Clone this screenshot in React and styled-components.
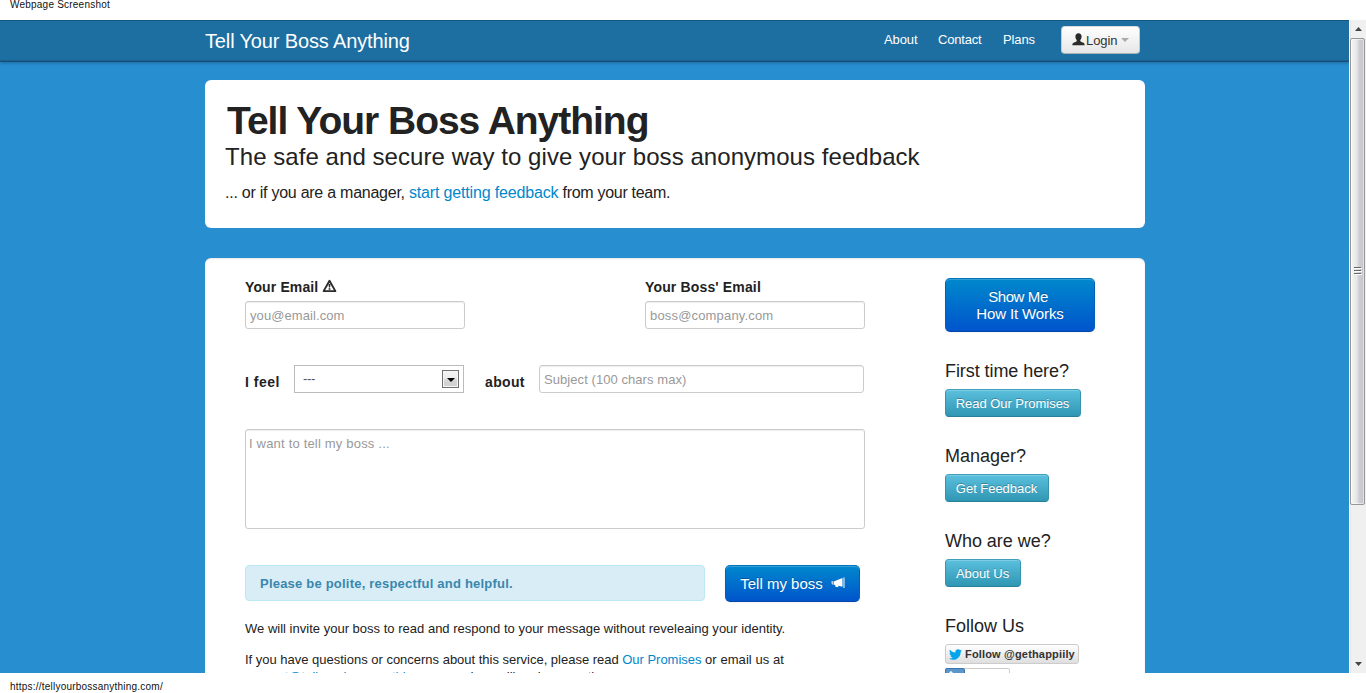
import React from 'react';
import styled, { createGlobalStyle } from 'styled-components';
import { FaTwitter } from 'react-icons/fa';

const GlobalStyle = createGlobalStyle`
  * { box-sizing: border-box; }
  body {
    margin: 0;
    background: #fff;
    color: #222;
    font: 13px/18px "Liberation Sans", Arial, sans-serif;
    overflow: hidden;
  }
  h1, h2, h4, p { margin: 0; font-weight: normal; }
`;

const Sheet = styled.div`
  display: flex;
  flex-direction: column;
  height: 693px;
  overflow: hidden;
`;

const Caption = styled.div`
  flex: 0 0 20px;
  padding-left: 10px;
  color: #111;
  font-size: 10px;
  line-height: ${(p) => p.$line};
  padding-top: ${(p) => p.$top};
  letter-spacing: 0.22px;
`;

const Browser = styled.div`
  display: flex;
  flex: 0 0 653px;
  overflow: hidden;
`;

const Page = styled.div`
  width: 1349px;
  height: 653px;
  overflow: hidden;
  background: #278ed0;
`;

const Text = styled.span`
  margin-right: ${(p) => p.$shift || 0}px;
  letter-spacing: ${(p) => p.$ls || 0}px;
  white-space: nowrap;
`;

const Link = styled.a`
  color: #0088cc;
  letter-spacing: ${(p) => p.$ls || 0}px;
  text-decoration: none;
`;

/* Navigation */
const Navbar = styled.header`
  height: 42px;
  background: #1d6ea1;
  border-top: 1px solid #15577c;
  border-bottom: 1px solid #154f7a;
  box-shadow: 0 1px 3px rgba(0, 0, 0, 0.25), inset 0 -1px 0 rgba(0, 0, 0, 0.12);
`;

const NavInner = styled.div`
  display: flex;
  align-items: flex-start;
  width: 935px;
  margin-left: 205px;
`;

const Brand = styled.a`
  margin: 9px auto 0 0;
  color: #fff;
  font-size: 20px;
  line-height: 22px;
  letter-spacing: -0.14px;
`;

const NavItem = styled.a`
  width: ${(p) => p.$width}px;
  margin-top: 10px;
  color: #fff;
  letter-spacing: ${(p) => p.$ls}px;
`;

const LoginButton = styled.button`
  display: flex;
  align-items: center;
  width: 79px;
  height: 28px;
  margin: 5px 0 0;
  padding: 1px 9px 0 10px;
  border: 1px solid #ccc;
  border-color: #d8dde0 #c4c9cc #aab2b6;
  border-radius: 4px;
  background: linear-gradient(#fff, #e6e6e6);
  color: #333;
  font: 13px/18px "Liberation Sans", Arial, sans-serif;
  letter-spacing: -0.1px;
  white-space: nowrap;
  svg { margin: 0 1px 2px 0; }
`;

const Caret = styled.i`
  margin: 0 0 2px 4px;
  border: 4px solid transparent;
  border-top-color: #aaa;
  border-bottom: 0;
`;

/* Hero */
const Hero = styled.section`
  width: 940px;
  height: 148px;
  margin: 18px 0 30px 205px;
  padding: 21px 20px 0;
  border-radius: 6px;
  background: #fff;
`;

const Title = styled.h1`
  && { font-weight: bold; }
  margin-left: 2px;
  font-size: 39px;
  line-height: 39px;
  letter-spacing: -1.02px;
`;

const Tagline = styled.h2`
  margin-top: 3px;
  font-size: 24px;
  line-height: 27px;
  letter-spacing: 0.06px;
`;

const Lead = styled.p`
  padding-top: 13px;
  font-size: 16px;
  line-height: 19px;
`;

/* Main panel */
const Panel = styled.main`
  display: flex;
  gap: 80px;
  width: 940px;
  height: 460px;
  margin-left: 205px;
  padding: 20px 40px 0;
  border-radius: 6px 6px 0 0;
  background: #fff;
  box-shadow: inset 0 1px 2px rgba(0, 0, 0, 0.1);
`;

const Form = styled.form`
  width: 620px;
`;

const FieldRow = styled.div`
  display: flex;
  height: ${(p) => p.$height}px;
  justify-content: ${(p) => p.$justify || 'flex-start'};
  margin-bottom: 36px;
`;

const Field = styled.div`
  display: flex;
  flex-direction: column;
  justify-content: space-between;
`;

const Label = styled.label`
  display: flex;
  width: ${(p) => p.$width || 'auto'};
  padding-top: ${(p) => p.$top || 0}px;
  font-size: 14px;
  font-weight: bold;
  letter-spacing: ${(p) => p.$ls || 0.13}px;
  white-space: nowrap;
`;

const Input = styled.input`
  width: ${(p) => p.$width}px;
  height: 28px;
  padding: 1px 4px 0;
  border: 1px solid #ccc;
  border-radius: 3px;
  background: #fff;
  box-shadow: inset 0 1px 1px rgba(0, 0, 0, 0.075);
  font: 13px/18px "Liberation Sans", Arial, sans-serif;
  letter-spacing: ${(p) => p.$ls}px;
  &::placeholder { color: #999; opacity: 1; }
`;

const Message = styled.textarea`
  display: block;
  width: 620px;
  height: 100px;
  margin-bottom: 36px;
  padding: 5px 4px 4px 3px;
  border: 1px solid #ccc;
  border-radius: 3px;
  box-shadow: inset 0 1px 1px rgba(0, 0, 0, 0.075);
  font: 13px/18px "Liberation Sans", Arial, sans-serif;
  letter-spacing: 0.19px;
  resize: none;
  &::placeholder { color: #999; opacity: 1; }
`;

const Select = styled.div`
  display: flex;
  align-items: center;
  justify-content: space-between;
  width: 170px;
  height: 28px;
  margin-right: 21px;
  padding: 0 4px 0 8px;
  border: 1px solid #bbb;
  color: #555;
  letter-spacing: -0.3px;
`;

const SelectArrow = styled.span`
  display: grid;
  place-items: center;
  width: 17px;
  height: 18px;
  border: 1px solid #707070;
  background: linear-gradient(#f4f4f4, #ececec 45%, #d6d6d6 55%, #cfcfcf);
  box-shadow: inset 0 0 0 1px #f6f6f6;
  &::after {
    content: '';
    margin-top: 2px;
    border: 4px solid transparent;
    border-top-color: #000;
    border-bottom: 0;
  }
`;

const SubmitRow = styled.div`
  display: flex;
  align-items: flex-start;
  gap: 20px;
  height: 37px;
`;

const Notice = styled.div`
  width: 460px;
  height: 36px;
  padding: 9px 14px 7px;
  border: 1px solid #bce8f1;
  border-radius: 4px;
  background: #d9edf7;
  color: #3a87ad;
  font-weight: bold;
  letter-spacing: 0.211px;
`;

const PrimaryButton = styled.button`
  display: flex;
  align-items: center;
  justify-content: center;
  width: ${(p) => p.$width}px;
  height: ${(p) => p.$height}px;
  padding: 0 0 1px 0;
  border: 1px solid #0064b4;
  border-color: #0074b8 #0060bc #0047a8;
  border-radius: 5px;
  background: linear-gradient(#0088cc, #0055cc);
  box-shadow: inset 0 1px 0 rgba(255, 255, 255, 0.2), 0 1px 2px rgba(0, 0, 0, 0.05);
  color: #fff;
  font: 15px/17px "Liberation Sans", Arial, sans-serif;
  text-shadow: 0 -1px 0 rgba(0, 0, 0, 0.25);
`;

const InfoButton = styled.button`
  display: block;
  width: ${(p) => p.$width}px;
  height: 28px;
  padding: 2px 1px 0 0;
  border: 1px solid #2f96b4;
  border-color: #3f9fba #3495b1 #287f99;
  border-radius: 4px;
  background: linear-gradient(#5bc0de, #2f96b4);
  box-shadow: inset 0 1px 0 rgba(255, 255, 255, 0.2);
  color: #fff;
  font: 13px/18px "Liberation Sans", Arial, sans-serif;
  letter-spacing: -0.03px;
  text-shadow: 0 -1px 0 rgba(0, 0, 0, 0.25);
`;

const Note = styled.p`
  margin-top: ${(p) => p.$top}px;
  white-space: nowrap;
`;

const Sidebar = styled.aside`
  width: 150px;
`;

const SideTitle = styled.h4`
  margin: 29px 0 8px;
  font-size: 18px;
  line-height: 20px;
  letter-spacing: ${(p) => p.$ls || 0}px;
`;

const TwitterButton = styled.a`
  display: flex;
  align-items: center;
  width: 134px;
  height: 20px;
  padding: 0 3px;
  border: 1px solid #ccc;
  border-radius: 3px;
  background: linear-gradient(#fff, #dedede);
  color: #333;
  font-size: 11px;
  font-weight: bold;
  letter-spacing: 0.17px;
  white-space: nowrap;
  svg { margin-right: 3px; }
`;

const LinkedInBadge = styled.div`
  display: flex;
  width: 65px;
  height: 20px;
  margin-top: 4px;
  border: 1px solid #ccc;
  border-left: 0;
  border-radius: 2px;
  background: #fff;
`;

const LinkedInMark = styled.span`
  width: 20px;
  height: 20px;
  margin-top: -1px;
  padding: 2px 3px;
  border: 1px solid #3b76ad;
  border-radius: 2px;
  background: #5a96c9;
  svg { display: block; }
`;

/* Window scrollbar */
const Scrollbar = styled.div`
  display: flex;
  flex-direction: column;
  width: 17px;
  border-left: 1px solid #fff;
  background: #f0f0f0;
  box-shadow: inset 1px 0 0 #e6e6e6;
`;

const ScrollArrow = styled.span`
  display: grid;
  place-items: center;
  height: 18px;
`;

const ScrollThumb = styled.div`
  display: grid;
  place-items: center;
  width: 15px;
  height: 467px;
  margin-bottom: auto;
  border: 1px solid #979797;
  border-radius: 2px;
  background: linear-gradient(90deg, #f5f5f5, #e6e6e8 45%, #d0d0d4 60%, #c4c4c9);
  box-shadow: inset 0 0 0 1px rgba(255, 255, 255, 0.5);
`;

const PersonIcon = () => (
  <svg width="13" height="13" viewBox="0 0 13 13" fill="#2b2b2b">
    <path d="M6.500.2C4.500.2 3.400 1.500 3.400 3.500c0 1.500.5 2.700 1.300 3.500v1C4.500 8.700 3.500 9 2 9.600.8 10.100.4 10.800.3 12.300h12.400c-.1-1.500-.5-2.200-1.700-2.700C9.500 9 8.500 8.700 8.300 8V7c.8-.8 1.300-2 1.300-3.500 0-2-1.100-3.300-3.100-3.300z" />
  </svg>
);

const WarningIcon = () => (
  <svg width="15" height="14" viewBox="0 0 15 14" style={{ marginLeft: 4, marginTop: 1 }}>
    <path d="M7.500 1.800 13.400 12.100H1.600z" fill="#fff" stroke="#2b2b2b" strokeWidth="1.900" strokeLinejoin="round" />
    <path d="M6.500 5h2L8.100 8.600H6.900zM6.600 9.200h1.800v1.500H6.600z" fill="#2b2b2b" />
  </svg>
);

const MegaphoneIcon = () => (
  <svg width="14" height="12" viewBox="0 0 14 12" fill="#fff" style={{ marginLeft: 8 }}>
    <path d="M12.500.5H13.500v10.500H12.500zM11.500 1v8.700L7.300 8.700v1.600l-3-.5V8L2.600 7.700V4.500zM.5 4.300 1.700 4v3.700L.8 7.200z" />
  </svg>
);

export default function App() {
  return (
    <>
      <GlobalStyle />
      <Sheet>
        <Caption $line="9px" $top="0">Webpage Screenshot</Caption>
        <Browser>
          <Page>
            <Navbar>
              <NavInner>
                <Brand>Tell Your Boss Anything</Brand>
                <NavItem $width={54} $ls={-0.1}>About</NavItem>
                <NavItem $width={65} $ls={-0.2}>Contact</NavItem>
                <NavItem $width={58} $ls={-0.1}>Plans</NavItem>
                <LoginButton>
                  <PersonIcon />
                  Login
                  <Caret />
                </LoginButton>
              </NavInner>
            </Navbar>

            <Hero>
              <Title>Tell Your Boss Anything</Title>
              <Tagline>The safe and secure way to give your boss anonymous feedback</Tagline>
              <Lead>
                <Text $ls={-0.25}>... or if you are a manager, </Text>
                <Link $ls={-0.16}>start getting feedback</Link>
                <Text $ls={-0.3}> from your team.</Text>
              </Lead>
            </Hero>

            <Panel>
              <Form>
                <FieldRow $height={51} $justify="space-between">
                  <Field>
                    <Label>Your Email <WarningIcon /></Label>
                    <Input $width={220} $ls={0.08} placeholder="you@email.com" />
                  </Field>
                  <Field>
                    <Label $ls={0.15}>Your Boss&apos; Email</Label>
                    <Input $width={220} $ls={0.17} placeholder="boss@company.com" />
                  </Field>
                </FieldRow>

                <FieldRow $height={28}>
                  <Label $width="49px" $top={8} $ls={0.5}>I feel</Label>
                  <Select>
                    ---
                    <SelectArrow />
                  </Select>
                  <Label $width="54px" $top={8} $ls={0.35}>about</Label>
                  <Input $width={325} $ls={0.065} placeholder="Subject (100 chars max)" />
                </FieldRow>

                <Message placeholder="I want to tell my boss ..." />

                <SubmitRow>
                  <Notice>Please be polite, respectful and helpful.</Notice>
                  <PrimaryButton type="button" $width={135} $height={37}>
                    Tell my boss
                    <MegaphoneIcon />
                  </PrimaryButton>
                </SubmitRow>

                <Note $top={18}>
                  <Text $ls={0.01}>
                    We will invite your boss to read and respond to your message without reveleaing your identity.
                  </Text>
                </Note>
                <Note $top={13}>
                  <Text $ls={-0.01}>If you have questions or concerns about this service, please read </Text>
                  <Link $ls={-0.03}>Our Promises</Link>
                  <Text $ls={0.06}> or email us at</Text>
                </Note>
                <Note $top={-1}>
                  <Link>support@tellyourbossanything.com</Link> and we will reply promptly.
                </Note>
              </Form>

              <Sidebar>
                <PrimaryButton $width={150} $height={54}>
                  <span>
                    <Text $ls={-0.4} $shift={4}>Show Me</Text>
                    <br />
                    <Text $ls={-0.12}>How It Works</Text>
                  </span>
                </PrimaryButton>
                <SideTitle $ls={-0.07}>First time here?</SideTitle>
                <InfoButton $width={136}>Read Our Promises</InfoButton>
                <SideTitle>Manager?</SideTitle>
                <InfoButton $width={104}>Get Feedback</InfoButton>
                <SideTitle $ls={-0.04}>Who are we?</SideTitle>
                <InfoButton $width={76}>About Us</InfoButton>
                <SideTitle>Follow Us</SideTitle>
                <TwitterButton>
                  <FaTwitter size={13} color="#00a5ec" />
                  Follow @gethappiily
                </TwitterButton>
                <LinkedInBadge>
                  <LinkedInMark>
                    <svg width="12" height="14" viewBox="0 0 12 14" fill="#fff">
                      <circle cx="2" cy="2" r="1.700" />
                      <path d="M.7 5h2.600v8H.7zM5 5h2.500v1.200C8.700 4.300 12 4.600 12 8v5H9.400V8.600c0-2.200-1.900-2-1.900 0V13H5z" />
                    </svg>
                  </LinkedInMark>
                </LinkedInBadge>
              </Sidebar>
            </Panel>
          </Page>

          <Scrollbar>
            <ScrollArrow>
              <svg width="7" height="4" viewBox="0 0 7 4"><path d="M3.500 0 7 4H0z" fill="#444" /></svg>
            </ScrollArrow>
            <ScrollThumb>
              <svg width="8" height="9" viewBox="0 0 8 9">
                <path d="M0 1.500h7M0 4.500h7M0 7.500h7" stroke="#fff" strokeWidth="1" transform="translate(1 0)" />
                <path d="M0 .5h7M0 3.500h7M0 6.500h7" stroke="#666" strokeWidth="1" />
              </svg>
            </ScrollThumb>
            <ScrollArrow>
              <svg width="7" height="4" viewBox="0 0 7 4"><path d="M3.500 4 7 0H0z" fill="#444" /></svg>
            </ScrollArrow>
          </Scrollbar>
        </Browser>
        <Caption $line="11px" $top="8px">https://tellyourbossanything.com/</Caption>
      </Sheet>
    </>
  );
}
